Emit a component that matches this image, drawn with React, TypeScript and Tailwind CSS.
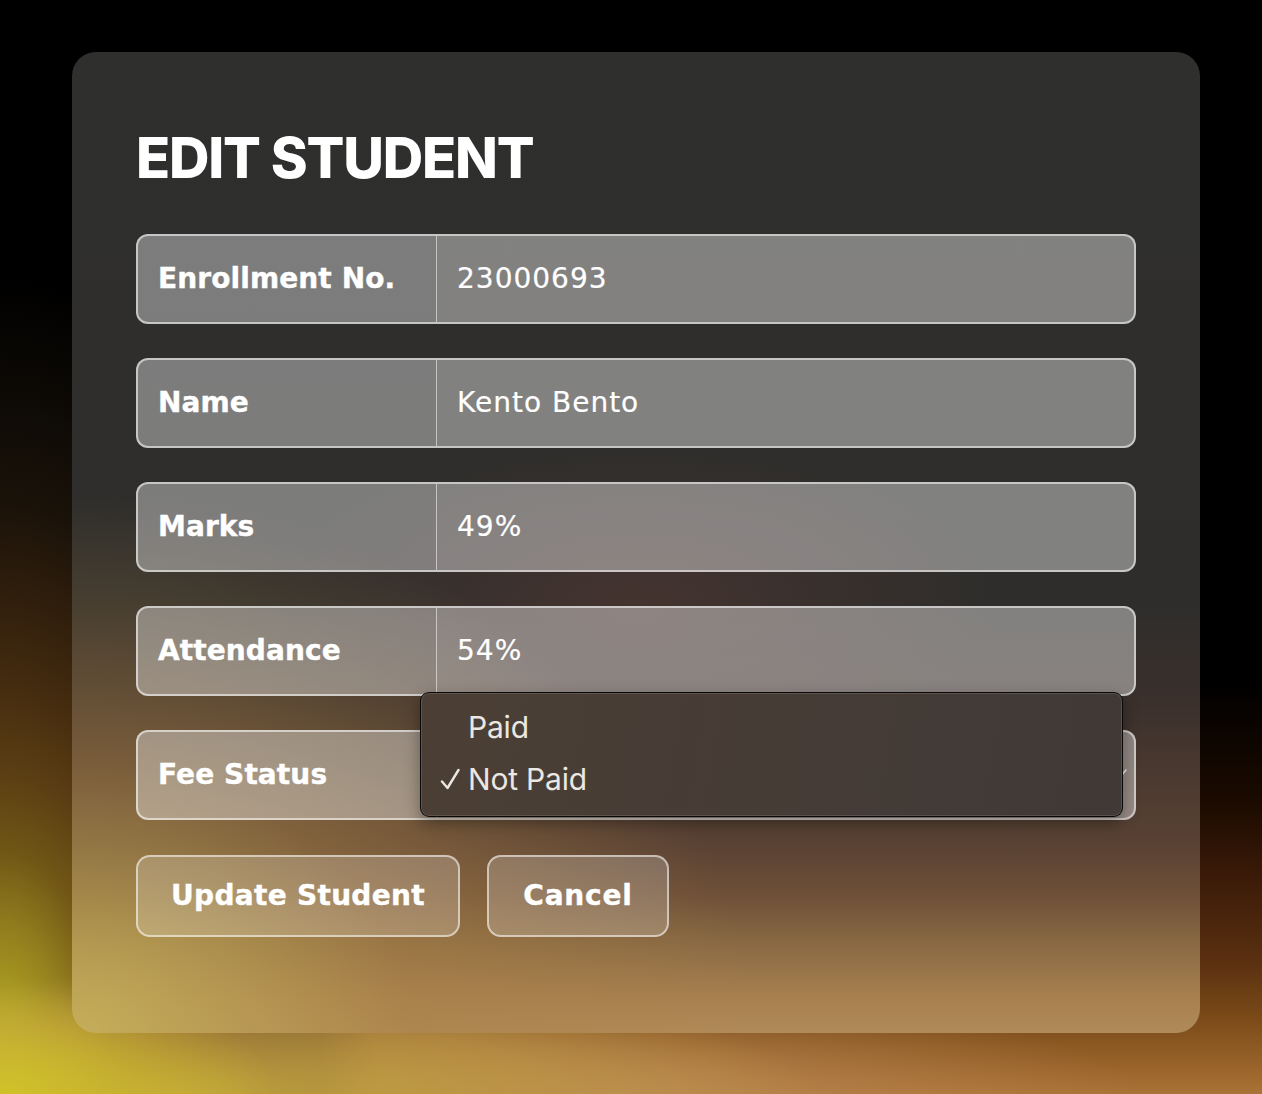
import React from "react";

const rows: { label: string; value: string }[] = [
  { label: "Enrollment No.", value: "23000693" },
  { label: "Name", value: "Kento Bento" },
  { label: "Marks", value: "49%" },
  { label: "Attendance", value: "54%" },
];

const dejavu = { fontFamily: "'DejaVu Sans', 'Noto Sans', sans-serif" };

function Row({ label, value, children }: { label: string; value?: string; children?: React.ReactNode }) {
  return (
    <div className="relative flex h-[90px] w-full rounded-[12px] border-2 border-white/55 bg-white/40">
      <div
        className="flex w-[299px] shrink-0 items-center rounded-l-[10px] border-r-[1.5px] border-white/55 bg-black/[0.03] pl-[20px] text-[28px] font-bold tracking-[0.1px] text-white [-webkit-text-stroke:0.4px_white]"
        style={dejavu}
      >
        {label}
      </div>
      <div className="flex flex-1 items-center pl-[20px] text-[28px] font-normal tracking-[1px] text-white [-webkit-text-stroke:0.2px_white]" style={dejavu}>
        {value}
      </div>
      {children}
    </div>
  );
}

export default function App() {
  return (
    <div
      className="relative min-h-[1094px] w-full overflow-hidden bg-black bg-[radial-gradient(ellipse_22%_10%_at_0%_100%,rgba(210,196,38,0.9)_0%,transparent_100%),radial-gradient(ellipse_50%_11%_at_15%_100%,rgba(196,168,62,0.92)_0%,rgba(190,152,72,0.65)_60%,transparent_100%),radial-gradient(ellipse_40%_9%_at_50%_100%,rgba(190,140,90,0.75)_0%,transparent_100%),radial-gradient(ellipse_30%_75%_at_0%_100%,rgba(200,192,40,1)_0%,rgba(176,168,32,0.95)_10%,rgba(154,136,32,0.9)_20%,rgba(122,96,24,0.85)_30%,rgba(106,74,24,0.8)_40%,rgba(90,58,20,0.75)_50%,rgba(70,44,18,0.7)_60%,rgba(40,28,14,0.65)_72%,rgba(24,18,10,0.55)_85%,transparent_100%),linear-gradient(to_bottom,#000_0%,#000_62%,#1a0a00_73%,#3a1a08_80%,#5a3010_88%,#7a4a18_93%,#aa7236_100%)] pt-[52px]"
      style={{ fontFamily: "Inter, 'Noto Sans', sans-serif" }}
    >
      <div className="relative mx-[72px] flex w-[1128px] flex-col rounded-[24px] bg-[radial-gradient(ellipse_60%_55%_at_0%_100%,rgba(200,180,90,0.85)_0%,rgba(170,130,70,0.5)_50%,transparent_100%),radial-gradient(ellipse_32%_16%_at_50%_56%,rgba(90,58,52,0.5)_0%,transparent_100%),linear-gradient(to_bottom,#2f2f2d_0%,#2e2d2b_56%,#3a302c_66%,#5a4234_81%,#6e5038_86%,#8a6a44_91%,#a88050_96.5%,#b08a58_100%)] px-[64px] pb-[96px] pt-[78px]">
        <h1 className="mb-[48px] text-[56px] font-extrabold leading-[56px] tracking-[-1.2px] text-white">EDIT STUDENT</h1>

        <div className="flex flex-col gap-[34px]">
          {rows.map((r) => (
            <Row key={r.label} label={r.label} value={r.value} />
          ))}
          <Row label="Fee Status">
            <svg className="absolute right-[7px] top-[37px] h-[8px] w-[12px]" viewBox="0 0 12 8" fill="none">
              <path d="M1 1l5 6 5-6" stroke="rgba(255,255,255,0.85)" strokeWidth="1.5" strokeLinecap="round" strokeLinejoin="round" />
            </svg>
            <div className="absolute left-[282px] top-[-40px] z-10 h-[125px] w-[703px] rounded-[9px] border border-black/85 bg-[linear-gradient(100deg,#4b3f35_0%,#463c36_50%,#3f3937_100%)] shadow-[inset_0_0_0_1px_rgba(255,255,255,0.12),0_6px_16px_rgba(0,0,0,0.35)]">
              <div className="flex flex-col pt-[8px] text-[30px] leading-[52px] text-[#ebe7e3]">
                <div className="flex items-center pl-[47px] tracking-[-0.2px]">Paid</div>
                <div className="flex items-center tracking-[-0.2px]">
                  <span className="flex w-[47px] justify-start pl-[19px]">
                    <svg width="20" height="22" viewBox="0 0 20 22" fill="none">
                      <path d="M2 13.5l5.5 6.5L18.5 2" stroke="#ebe7e3" strokeWidth="2.4" strokeLinecap="round" strokeLinejoin="round" />
                    </svg>
                  </span>
                  <span>Not Paid</span>
                </div>
              </div>
            </div>
          </Row>
        </div>

        <div className="mt-[35px] flex gap-[27px]">
          <button
            className="h-[82px] w-[324px] rounded-[14px] border-2 border-white/55 bg-white/20 text-[28px] font-bold tracking-[0.3px] text-white [-webkit-text-stroke:0.4px_white]"
            style={dejavu}
          >
            Update Student
          </button>
          <button
            className="h-[82px] w-[182px] rounded-[14px] border-2 border-white/55 bg-white/20 text-[28px] font-bold tracking-[0.8px] text-white [-webkit-text-stroke:0.4px_white]"
            style={dejavu}
          >
            Cancel
          </button>
        </div>
      </div>
    </div>
  );
}
